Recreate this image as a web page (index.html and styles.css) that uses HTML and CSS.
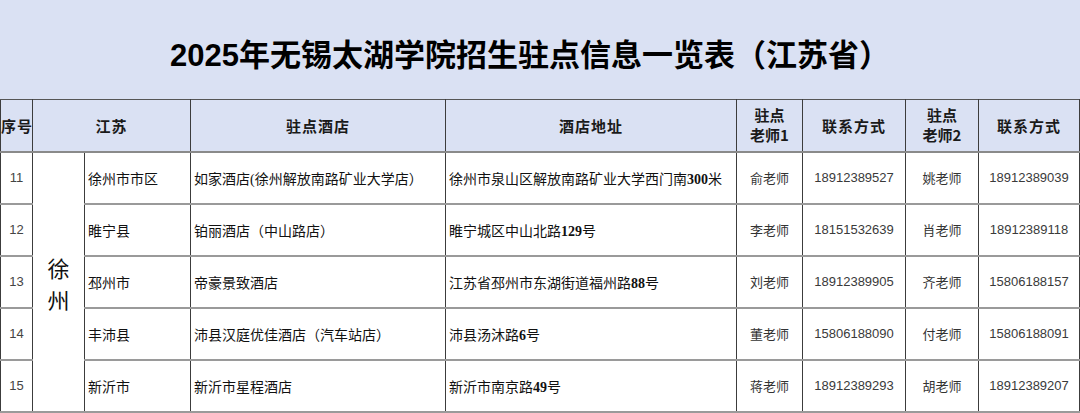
FILE: index.html
```html
<!DOCTYPE html>
<html lang="zh-CN">
<head>
<meta charset="utf-8">
<title>2025年无锡太湖学院招生驻点信息一览表（江苏省）</title>
<link rel="stylesheet" href="styles.css">
</head>
<body>
<div class="sheet">
  <div class="title">2025年无锡太湖学院招生驻点信息一览表（江苏省）</div>
  <table class="grid">
    <colgroup>
      <col class="c-no"><col class="c-city"><col class="c-area"><col class="c-hotel"><col class="c-addr">
      <col class="c-t1"><col class="c-p1"><col class="c-t2"><col class="c-p2">
    </colgroup>
    <thead>
      <tr>
        <th>序号</th>
        <th colspan="2">江苏</th>
        <th>驻点酒店</th>
        <th>酒店地址</th>
        <th class="two">驻点<br>老师1</th>
        <th>联系方式</th>
        <th class="two">驻点<br>老师2</th>
        <th>联系方式</th>
      </tr>
    </thead>
    <tbody>
      <tr>
        <td class="no">11</td>
        <td class="city" rowspan="5"><span class="ch">徐</span><span class="ch">州</span></td>
        <td class="txt">徐州市市区</td>
        <td class="txt">如家酒店(徐州解放南路矿业大学店）</td>
        <td class="txt">徐州市泉山区解放南路矿业大学西门南<b class="num">300</b>米</td>
        <td class="name">俞老师</td>
        <td class="tel">18912389527</td>
        <td class="name">姚老师</td>
        <td class="tel">18912389039</td>
      </tr>
      <tr>
        <td class="no">12</td>
        <td class="txt">睢宁县</td>
        <td class="txt">铂丽酒店（中山路店）</td>
        <td class="txt">睢宁城区中山北路<b class="num">129</b>号</td>
        <td class="name">李老师</td>
        <td class="tel">18151532639</td>
        <td class="name">肖老师</td>
        <td class="tel">18912389118</td>
      </tr>
      <tr>
        <td class="no">13</td>
        <td class="txt">邳州市</td>
        <td class="txt">帝豪景致酒店</td>
        <td class="txt">江苏省邳州市东湖街道福州路<b class="num">88</b>号</td>
        <td class="name">刘老师</td>
        <td class="tel">18912389905</td>
        <td class="name">齐老师</td>
        <td class="tel">15806188157</td>
      </tr>
      <tr>
        <td class="no">14</td>
        <td class="txt">丰沛县</td>
        <td class="txt">沛县汉庭优佳酒店（汽车站店）</td>
        <td class="txt">沛县汤沐路<b class="num">6</b>号</td>
        <td class="name">董老师</td>
        <td class="tel">15806188090</td>
        <td class="name">付老师</td>
        <td class="tel">15806188091</td>
      </tr>
      <tr>
        <td class="no">15</td>
        <td class="txt">新沂市</td>
        <td class="txt">新沂市星程酒店</td>
        <td class="txt">新沂市南京路<b class="num">49</b>号</td>
        <td class="name">蒋老师</td>
        <td class="tel">18912389293</td>
        <td class="name">胡老师</td>
        <td class="tel">18912389207</td>
      </tr>
    </tbody>
  </table>
</div>
</body>
</html>
```

FILE: styles.css
```css
html, body {
  margin: 0;
  padding: 0;
  background: #ffffff;
}

.sheet {
  width: 1080px;
}

.title {
  height: 99px;
  box-sizing: border-box;
  padding-top: 6px;
  padding-right: 20px;
  background: #dae1f3;
  display: flex;
  align-items: center;
  justify-content: center;
  font-family: "Liberation Sans", "Noto Sans CJK SC", sans-serif;
  font-weight: 700;
  font-size: 31px;
  color: #000;
}

.grid {
  width: 1080px;
  table-layout: fixed;
  border-collapse: collapse;
}

.c-no { width: 32px; }
.c-city { width: 52px; }
.c-area { width: 106px; }
.c-hotel { width: 255px; }
.c-addr { width: 291px; }
.c-t1 { width: 66px; }
.c-p1 { width: 103px; }
.c-t2 { width: 73px; }
.c-p2 { width: 101px; }

.grid th,
.grid td {
  border-left: 1px solid #3c3c3c;
  border-right: 1px solid #3c3c3c;
  padding: 0;
  overflow: hidden;
  white-space: nowrap;
}

.grid thead tr {
  height: 52px;
}

.grid th {
  background: #dae1f3;
  border-top: 1px solid #555;
  border-bottom: 2px solid #8a8a8a;
  font-family: "Noto Sans CJK SC", sans-serif;
  font-weight: 700;
  font-size: 15px;
  letter-spacing: 1px;
  color: #1a1a1a;
  text-align: center;
  vertical-align: middle;
}

.grid th.two {
  font-size: 15px;
  line-height: 20px;
  letter-spacing: 0;
}

.grid tbody tr {
  height: 52px;
}

.grid td {
  border-bottom: 2px solid #9a9a9a;
  vertical-align: middle;
  color: #111;
}

.grid td.no {
  font-family: "Liberation Sans", sans-serif;
  font-size: 13px;
  color: #444;
  text-align: center;
}

.grid td.city {
  font-family: "Noto Sans CJK SC", serif;
  font-size: 22px;
  text-align: center;
  color: #111;
  padding-top: 2px;
}

.grid td.city .ch {
  display: block;
  line-height: 32px;
}

.grid td.txt {
  font-family: "Liberation Serif", "Noto Sans CJK SC", serif;
  font-size: 14px;
  padding-left: 3px;
  text-align: left;
}

.grid td.txt .num {
  font-weight: 700;
}

.grid td.name {
  font-family: "Noto Sans CJK SC", sans-serif;
  font-size: 13px;
  color: #333;
  text-align: center;
}

.grid td.tel {
  font-family: "Liberation Sans", sans-serif;
  font-size: 13px;
  color: #3a3a3a;
  text-align: center;
}
```
